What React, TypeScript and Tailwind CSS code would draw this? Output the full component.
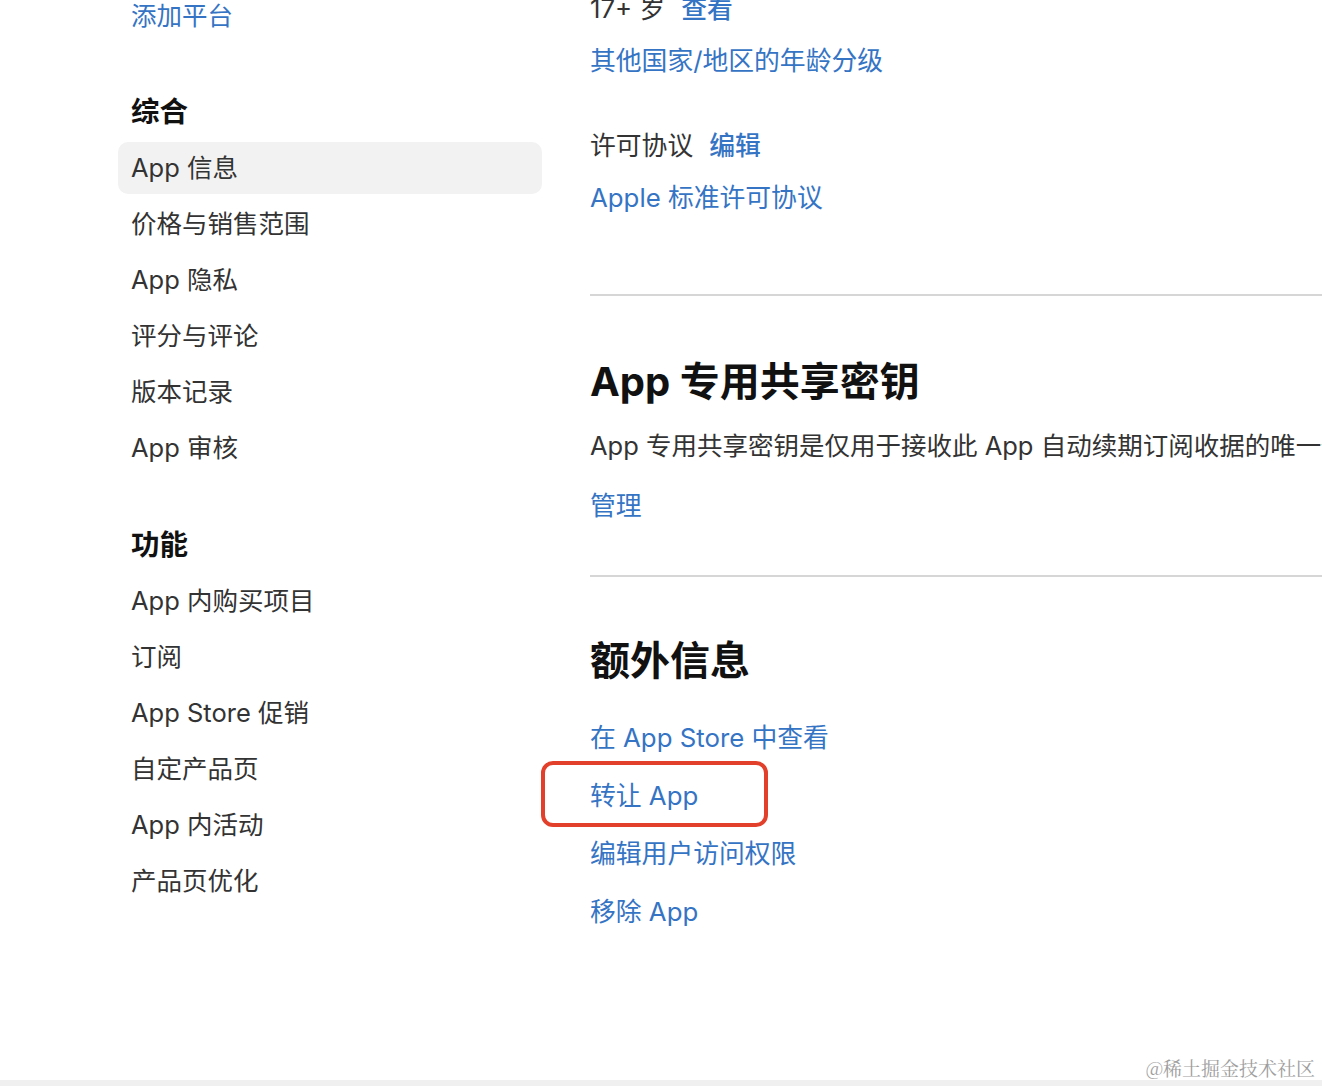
const FONT = 'font-[Inter,"Noto_Sans_CJK_SC",sans-serif]';

const GENERAL = ['App 信息', '价格与销售范围', 'App 隐私', '评分与评论', '版本记录', 'App 审核'];
const FEATURES = ['App 内购买项目', '订阅', 'App Store 促销', '自定产品页', 'App 内活动', '产品页优化'];

function NavItem({ label, active }: { label: string; active?: boolean }) {
  return (
    <div
      className={`h-[52px] flex items-center px-[13px] rounded-[10px] text-[25.5px] text-[#333] ${
        active ? 'bg-[#f2f2f2]' : ''
      }`}
    >
      {label}
    </div>
  );
}

function LinkRow({ children }: { children: React.ReactNode }) {
  return (
    <div className="h-[52px] flex items-center text-[25.8px] text-[#3574c4] whitespace-nowrap">{children}</div>
  );
}

export default function App() {
  return (
    <div className={`relative w-[1322px] h-[1086px] overflow-hidden bg-white ${FONT}`}>
      <div className="flex">
        {/* Sidebar */}
        <aside className="ml-[118px] w-[424px] shrink-0 flex flex-col -mt-[10px]">
          <div className="h-[52px] flex items-center px-[13px] text-[25.5px] text-[#3574c4]">添加平台</div>

          <h2 className="mt-[50px] h-[40px] flex items-center px-[13px] text-[28.5px] font-bold text-[#111]">综合</h2>
          <div className="mt-[10px] flex flex-col gap-1">
            {GENERAL.map((l, i) => (
              <NavItem key={l} label={l} active={i === 0} />
            ))}
          </div>

          <h2 className="mt-[51px] h-[40px] flex items-center px-[13px] text-[28.5px] font-bold text-[#111]">功能</h2>
          <div className="mt-[10px] flex flex-col gap-1">
            {FEATURES.map((l) => (
              <NavItem key={l} label={l} />
            ))}
          </div>
        </aside>

        {/* Main */}
        <main className="ml-[48px] flex-1 min-w-0 flex flex-col -mt-[17px]">
          <div className="h-[52px] flex items-center gap-[16px] text-[25.8px] whitespace-nowrap">
            <span className="text-[#333]">17+ 岁</span>
            <span className="text-[#3574c4] font-medium">查看</span>
          </div>
          <LinkRow>其他国家/地区的年龄分级</LinkRow>

          <div className="mt-[33px] h-[52px] flex items-center gap-[16px] text-[25.8px] whitespace-nowrap">
            <span className="text-[#333]">许可协议</span>
            <span className="text-[#3574c4] font-medium">编辑</span>
          </div>
          <LinkRow>Apple 标准许可协议</LinkRow>

          <div className="mt-[70px] border-t-2 border-[#d6d6d6]" />

          <h1 className="mt-[60px] h-[52px] flex items-center text-[40px] font-bold text-[#111] whitespace-nowrap">
            App 专用共享密钥
          </h1>
          <p className="mt-[12px] h-[52px] flex items-center text-[25.5px] text-[#333] whitespace-nowrap">
            App 专用共享密钥是仅用于接收此 App 自动续期订阅收据的唯一代码。如果您需要将此 App 转让给其他开发者，或者需要将主共享密钥设置为专用共享密钥，可以使用此密钥。
          </p>
          <div className="mt-[8px]">
            <LinkRow>管理</LinkRow>
          </div>

          <div className="mt-[43px] border-t-2 border-[#d6d6d6]" />

          <h1 className="mt-[58px] h-[52px] flex items-center text-[40px] font-bold text-[#111] whitespace-nowrap">
            额外信息
          </h1>
          <div className="mt-[25px] flex flex-col gap-[6px]">
            <LinkRow>在 App Store 中查看</LinkRow>
            <div className="relative">
              <LinkRow>转让 App</LinkRow>
              <div className="absolute -left-[49px] -top-[9px] w-[227px] h-[66px] border-[4px] border-[#e2402b] rounded-[12px]" />
            </div>
            <LinkRow>编辑用户访问权限</LinkRow>
            <LinkRow>移除 App</LinkRow>
          </div>
        </main>
      </div>

      {/* Watermark */}
      <div className='absolute right-[7px] bottom-[4px] text-[19px] text-[#9e9e9e] font-["Noto_Serif_CJK_SC","Liberation_Serif",serif]'>
        @稀土掘金技术社区
      </div>
      <div className="absolute left-0 right-0 bottom-0 h-[6px] bg-[#f0f0f0]" />
    </div>
  );
}
